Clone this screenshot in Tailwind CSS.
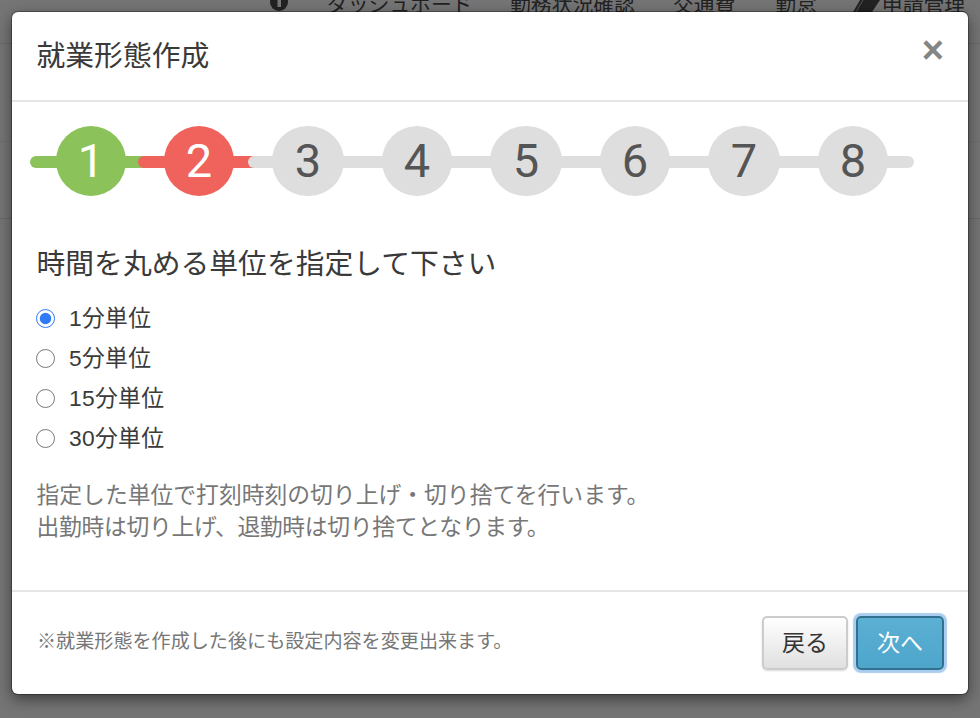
<!DOCTYPE html>
<html lang="ja">
<head>
    <meta charset="UTF-8">
    <title>就業形態作成</title>
    <script src="https://cdn.jsdelivr.net/npm/@tailwindcss/browser@4"></script>
</head>
<body class="relative h-[718px] w-[980px] overflow-hidden bg-[#757575] font-['Liberation_Sans','Noto_Sans_CJK_JP',sans-serif] text-[#3a3a3a]">
    <!-- page behind the overlay -->
    <nav class="flex h-[12px] overflow-hidden text-[20.8px] leading-[26px] text-[#222]">
        <div class="flex h-[26px] shrink-0 -translate-y-[8px] items-center whitespace-nowrap pl-[270px]">
            <svg class="h-[18px] w-[18px] -translate-y-[3px]" viewBox="0 0 18 18"><circle cx="9" cy="9" r="9" fill="#222"/><rect x="7.5" y="7" width="3.5" height="7" fill="#777"/></svg>
            <span class="ml-[39px]">ダッシュボード</span>
            <span class="ml-[37.5px]">勤務状況確認</span>
            <span class="ml-[38px]">交通費</span>
            <span class="ml-[40px]">勤怠</span>
            <svg class="ml-[36px] h-[26px] w-[27px]" viewBox="0 0 27 26"><path d="M7 8h20l-8 12H0z" fill="#222"/><path d="M10 8L3 20" stroke="#777" stroke-width="1" opacity="0.6"/></svg>
            <span class="ml-[2px]">申請管理</span>
        </div>
    </nav>
    <!-- faint rows of the page behind -->
    <div class="absolute top-[43px] left-0 h-px w-full bg-black/10"></div>
    <div class="absolute top-[141px] left-0 h-px w-full bg-black/5"></div>
    <div class="absolute top-[218px] left-0 h-px w-full bg-black/10"></div>

    <!-- modal -->
    <div class="relative mx-[12px] flex h-[682px] w-[956px] flex-col rounded-[6px] bg-white shadow-[0_0_0_1px_rgba(0,0,0,0.3),0_5px_15px_rgba(0,0,0,0.5)]">
        <div class="flex h-[90px] shrink-0 items-start justify-between border-b-2 border-[#e5e5e5] pr-[24px] pl-[24.5px]">
            <h4 class="pt-[24px] text-[28.8px] leading-[40px] font-normal">就業形態作成</h4>
            <button class="pt-[20px] text-[38px] leading-[36px] font-bold text-[#858585]">×</button>
        </div>

        <div class="flex-1 px-[25px]">
            <!-- steps -->
            <div class="relative mt-[24px] ml-[-7px] h-[72px] w-[884px]">
                <div class="absolute top-[30px] left-0 h-[12px] w-[120px] rounded-full bg-[#8bc35a]"></div>
                <div class="absolute top-[30px] left-[108px] h-[12px] w-[124px] rounded-full bg-[#ef635c]"></div>
                <div class="absolute top-[30px] left-[218px] h-[12px] w-[666px] rounded-full bg-[#dedede]"></div>
                <div class="absolute inset-x-0 top-0 flex pl-[26px] font-['Roboto',sans-serif] text-[47px] leading-[70px] font-normal text-[#555]">
                    <span class="flex h-[70px] w-[70px] items-center justify-center rounded-full bg-[#8bc35a] text-white">1</span>
                    <span class="ml-[38px] flex h-[70px] w-[70px] items-center justify-center rounded-full bg-[#ef635c] text-white">2</span>
                    <span class="ml-[38px] flex h-[70px] w-[72px] items-center justify-center rounded-full bg-[#dedede]">3</span>
                    <span class="ml-[38px] flex h-[70px] w-[70px] items-center justify-center rounded-full bg-[#dedede]">4</span>
                    <span class="ml-[38px] flex h-[70px] w-[72px] items-center justify-center rounded-full bg-[#dedede]">5</span>
                    <span class="ml-[38px] flex h-[70px] w-[70px] items-center justify-center rounded-full bg-[#dedede]">6</span>
                    <span class="ml-[38px] flex h-[70px] w-[72px] items-center justify-center rounded-full bg-[#dedede]">7</span>
                    <span class="ml-[38px] flex h-[70px] w-[70px] items-center justify-center rounded-full bg-[#dedede]">8</span>
                </div>
            </div>

            <h3 class="mt-[46px] -ml-[0.5px] text-[28.8px] leading-[40px] font-normal">時間を丸める単位を指定して下さい</h3>

            <div class="mt-[14px] -ml-[1px] flex flex-col text-[22.8px] leading-[40px] tracking-[0.3px]">
                <label class="flex h-[40px] items-center gap-[14px]"><input type="radio" name="unit" checked class="h-[19px] w-[19px] accent-[#2f7bf6]">1分単位</label>
                <label class="flex h-[40px] items-center gap-[14px]"><input type="radio" name="unit" class="h-[19px] w-[19px]">5分単位</label>
                <label class="flex h-[40px] items-center gap-[14px]"><input type="radio" name="unit" class="h-[19px] w-[19px]">15分単位</label>
                <label class="flex h-[40px] items-center gap-[14px]"><input type="radio" name="unit" class="h-[19px] w-[19px]">30分単位</label>
            </div>

            <p class="mt-[21px] -ml-[0.5px] text-[22.8px] leading-[32px] text-[#777]">指定した単位で打刻時刻の切り上げ・切り捨てを行います。<br><span class="tracking-[-0.3px]">出勤時は切り上げ、退勤時は切り捨てとなります。</span></p>
        </div>

        <div class="flex h-[104px] shrink-0 items-center justify-between border-t-2 border-[#e5e5e5] pr-[24px] pl-[25px]">
            <p class="pb-[2px] text-[19.1px] text-[#777]">※就業形態を作成した後にも設定内容を変更出来ます。</p>
            <div class="flex gap-[8px]">
                <button class="h-[54px] w-[86px] rounded-[5px] border-2 border-[#ccc] bg-gradient-to-b from-white to-[#e0e0e0] text-[23px] text-[#333] shadow-[0_1px_2px_rgba(0,0,0,0.15)]">戻る</button>
                <button class="h-[54px] w-[88px] rounded-[5px] border-2 border-[#31708f] bg-gradient-to-b from-[#5bb0d3] to-[#4ea5cb] text-[23px] text-white shadow-[0_0_1px_3px_#a9cdee]">次へ</button>
            </div>
        </div>
    </div>
</body>
</html>
